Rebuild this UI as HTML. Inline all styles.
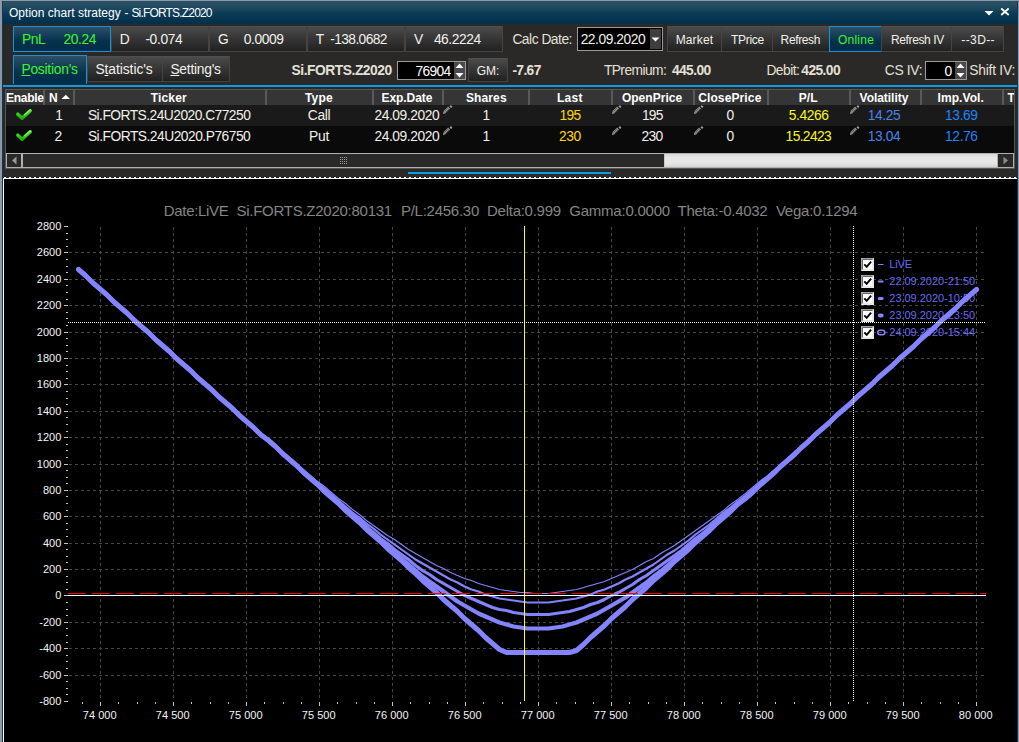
<!DOCTYPE html>
<html><head><meta charset="utf-8"><title>Option chart strategy - Si.FORTS.Z2020</title>
<style>
*{box-sizing:border-box;margin:0;padding:0}
html,body{width:1019px;height:742px;overflow:hidden;background:#2b2927}
body{position:relative;font-family:"Liberation Sans",sans-serif;font-size:13.33px;letter-spacing:-0.2px;color:#f0f0f0;line-height:1}
.abs{position:absolute}
.bl{position:absolute;left:0;top:0;width:2px;height:742px;background:#8e98a7}
.bl2{position:absolute;left:2px;top:1px;width:1px;height:741px;background:#0c3850}
.bt{position:absolute;left:0;top:0;width:1019px;height:1px;background:#8e98a7}
.br{position:absolute;left:1018px;top:0;width:1px;height:742px;background:#8e98a7}
.br2{position:absolute;left:1017px;top:1px;width:1px;height:741px;background:#0c3850}
.title{position:absolute;left:3px;top:1px;width:1014px;height:23px;background:linear-gradient(#2b5066 0%,#284e63 18%,#16435c 40%,#0b3a54 56%,#00304c 100%);}
.title span{position:absolute;left:6px;top:6px;font-size:12px;letter-spacing:-0.3px;color:#fff;white-space:nowrap}
.btn{position:absolute;top:26px;height:26px;border:1px solid #444;border-top-color:#4e4e4e;border-bottom-color:#464646;background:linear-gradient(#4b4b4b 0%,#3b3b3b 35%,#212121 100%);white-space:pre;color:#f2f2f2}
.btn span{position:absolute;top:6px;white-space:pre}
.btn.sel{border:1px solid #1592d8;background:linear-gradient(#2c5069,#05314c 60%,#002d49);color:#3fe83f}
.seg{font-size:12px;letter-spacing:0}
.tab{position:absolute;top:56px;height:26px;border:1px solid #444;border-top-color:#4e4e4e;background:linear-gradient(#4b4b4b 0%,#3b3b3b 35%,#212121 100%);font-size:13.33px;letter-spacing:-0.08px;color:#f2f2f2}
.tab span{position:absolute;top:5px;white-space:pre}
.tab.sel{top:55px;height:29px;border:1px solid #1592d8;border-bottom:none;background:linear-gradient(#2c5069,#05314c 60%,#002d49);color:#3fe83f}
u{text-decoration:underline;text-underline-offset:1px;text-decoration-thickness:1px}
.t{position:absolute;white-space:pre;line-height:1;color:#e4e0d8}
.b{font-weight:bold;color:#ececec}
.blue{position:absolute;left:3px;top:85px;width:1014px;height:2px;background:#0f9be4}
.spin{position:absolute;background:#000;border:1px solid #9a9a9a;color:#fff}
.spin span{position:absolute;top:3px;text-align:right;white-space:pre}
.spin .ud{position:absolute;right:0;top:0;width:13px;height:100%;background:#5a5a5a}
.grid{position:absolute;left:5px;top:89px;width:1010px;height:80px;border:1px solid #565656;background:#0a0a0a;overflow:hidden}
.hd{position:absolute;top:0;height:16px;background:#353535;border-right:1px solid #5c5c5c;border-left:1px solid #5c5c5c;font-weight:bold;font-size:12.3px;color:#fff;text-align:center;white-space:nowrap;padding-top:2px}
.row{position:absolute;left:0;width:1007px;height:21px}
.cell{position:absolute;top:3px;white-space:pre;font-size:13.33px;letter-spacing:-0.28px;color:#e6e6e6}
.c{text-align:center}
svg.chart{position:absolute;left:0;top:0}
svg text{font-family:"Liberation Sans",sans-serif;letter-spacing:0}
</style></head><body>
<div class="title">
<svg class="abs" style="left:978px;top:5px" width="34" height="14" viewBox="0 0 34 14"><path d="M3.5 5 h9 l-4.5 4.6z" fill="#fff"/><path d="M20.2 2.5 L27.7 9 M27.7 2.5 L20.2 9" stroke="#fff" stroke-width="1.8" fill="none"/></svg>
</div>
<div class="bl"></div><div class="bl2"></div><div class="bt"></div><div class="br"></div><div class="br2"></div>

<div class="t" style="left:9.00px;top:7px;font-size:12px;letter-spacing:0.015px;color:#fff">Option chart strategy</div>
<div class="t" style="left:124.60px;top:7px;font-size:12px;letter-spacing:0.800px;color:#fff">-</div>
<div class="t" style="left:131.40px;top:7px;font-size:12px;letter-spacing:-0.822px;color:#fff">Si.FORTS.Z2020</div>
<!-- row 1 -->
<div class="btn sel" style="left:13px;width:98px"></div>
<div class="btn" style="left:111px;width:98px"></div>
<div class="btn" style="left:209px;width:98px"></div>
<div class="btn" style="left:307px;width:98px"></div>
<div class="btn" style="left:405px;width:98px"></div>
<div class="t" style="left:22.00px;top:33.30px;font-size:13.8px;letter-spacing:-0.454px;color:#3cf52c">PnL</div>
<div class="t" style="left:63.40px;top:33.30px;font-size:13.8px;letter-spacing:-0.346px;color:#3cf52c">20.24</div>
<div class="t" style="left:119.80px;top:33.30px;font-size:13.8px;letter-spacing:-0.869px;color:#f2f0ea">D</div>
<div class="t" style="left:145.40px;top:33.30px;font-size:13.8px;letter-spacing:-0.371px;color:#f2f0ea">-0.074</div>
<div class="t" style="left:217.90px;top:33.30px;font-size:13.8px;letter-spacing:-0.434px;color:#f2f0ea">G</div>
<div class="t" style="left:243.80px;top:33.30px;font-size:13.8px;letter-spacing:-0.401px;color:#f2f0ea">0.0009</div>
<div class="t" style="left:315.65px;top:33.30px;font-size:13.8px;letter-spacing:0.613px;color:#f2f0ea">T</div>
<div class="t" style="left:330.15px;top:33.30px;font-size:13.8px;letter-spacing:-0.593px;color:#f2f0ea">-138.0682</div>
<div class="t" style="left:413.90px;top:33.30px;font-size:13.8px;letter-spacing:0.297px;color:#f2f0ea">V</div>
<div class="t" style="left:433.90px;top:33.30px;font-size:13.8px;letter-spacing:-0.439px;color:#f2f0ea">46.2224</div>
<div class="t" style="left:512.40px;top:33.30px;font-size:13.8px;letter-spacing:-0.487px;">Calc Date:</div>
<div class="spin" style="left:577px;top:27px;width:86px;height:24px"><div class="ud" style="width:11px;right:1px;top:1px;height:20px;background:#3e3e3e"><svg width="11" height="20"><path d="M1.5 8.5h8l-4 4z" fill="#fff"/></svg></div></div>
<div class="t" style="left:580.65px;top:33.30px;font-size:13.8px;letter-spacing:-0.451px;color:#f2f0ea">22.09.2020</div>
<div class="btn" style="left:667px;width:55px"></div>
<div class="btn" style="left:721px;width:52px"></div>
<div class="btn" style="left:772px;width:58px"></div>
<div class="btn sel" style="left:829px;width:53px"></div>
<div class="btn" style="left:881px;width:71px"></div>
<div class="btn" style="left:951px;width:53px"></div>
<div class="t" style="left:675.65px;top:33.84px;font-size:12px;letter-spacing:0.144px;color:#f2f0ea">Market</div>
<div class="t" style="left:730.90px;top:33.84px;font-size:12px;letter-spacing:-0.279px;color:#f2f0ea">TPrice</div>
<div class="t" style="left:780.60px;top:33.84px;font-size:12px;letter-spacing:-0.376px;color:#f2f0ea">Refresh</div>
<div class="t" style="left:837.90px;top:33.84px;font-size:12px;letter-spacing:0.252px;color:#3cf52c">Online</div>
<div class="t" style="left:891.00px;top:33.84px;font-size:12px;letter-spacing:-0.380px;color:#f2f0ea">Refresh IV</div>
<div class="t" style="left:961.30px;top:33.84px;font-size:12px;letter-spacing:0.395px;color:#f2f0ea">--3D--</div>
<!-- row 2 -->
<div class="tab sel" style="left:13px;width:74px"></div>
<div class="tab" style="left:87px;width:76px"></div>
<div class="tab" style="left:162px;width:68px"></div>
<div class="t" style="left:21.40px;top:63.30px;font-size:13.8px;letter-spacing:-0.233px;color:#3cf52c"><u>P</u>osition&#39;s</div>
<div class="t" style="left:95.40px;top:63.30px;font-size:13.8px;letter-spacing:-0.049px;color:#f2f0ea">S<u>t</u>atistic&#39;s</div>
<div class="t" style="left:170.40px;top:63.30px;font-size:13.8px;letter-spacing:-0.244px;color:#f2f0ea"><u>S</u>etting&#39;s</div>
<div class="t" style="left:291.60px;top:64.30px;font-size:13.8px;font-weight:bold;letter-spacing:-0.463px;">Si.FORTS.Z2020</div>
<div class="spin" style="left:397px;top:61px;width:69px;height:19px"><div class="ud" style="width:11px;right:0;background:#4a4a4a"><svg width="11" height="17"><path d="M1.5 6l4-4.5 4 4.5z M1.5 11l4 4.5 4-4.5z" fill="#fff"/></svg></div></div>
<div class="t" style="left:415.50px;top:65.30px;font-size:13.8px;letter-spacing:-0.695px;color:#fff">76904</div>
<div class="btn" style="left:468px;top:58px;width:40px;height:24px"></div>
<div class="t" style="left:476.80px;top:64.84px;font-size:12px;letter-spacing:-0.057px;color:#f2f0ea">GM:</div>
<div class="t" style="left:512.40px;top:64.30px;font-size:13.8px;font-weight:bold;letter-spacing:-0.631px;">-7.67</div>
<div class="t" style="left:603.90px;top:64.30px;font-size:13.8px;letter-spacing:-0.574px;">TPremium:</div>
<div class="t" style="left:671.90px;top:64.30px;font-size:13.8px;font-weight:bold;letter-spacing:-0.567px;">445.00</div>
<div class="t" style="left:766.40px;top:64.30px;font-size:13.8px;letter-spacing:-0.524px;">Debit:</div>
<div class="t" style="left:801.30px;top:64.30px;font-size:13.8px;font-weight:bold;letter-spacing:-0.584px;">425.00</div>
<div class="t" style="left:884.80px;top:64.30px;font-size:13.8px;letter-spacing:-0.327px;">CS IV:</div>
<div class="spin" style="left:925px;top:61px;width:42px;height:19px"><div class="ud" style="width:11px;right:0;background:#4a4a4a"><svg width="11" height="17"><path d="M1.5 6l4-4.5 4 4.5z M1.5 11l4 4.5 4-4.5z" fill="#fff"/></svg></div></div>
<div class="t" style="left:944.40px;top:65.30px;font-size:13.8px;letter-spacing:-0.687px;color:#fff">0</div>
<div class="t" style="left:969.30px;top:64.30px;font-size:13.8px;letter-spacing:-0.235px;">Shift IV:</div>
<div class="blue"></div>
<!-- grid -->
<div class="grid"></div>
<div class="abs" style="left:6px;top:90px;width:1008px;height:15px;background:#353535"></div>
<div class="abs" style="left:6px;top:105px;width:1008px;height:21px;background:#1a1a1a"></div>
<div class="abs" style="left:43px;top:90px;width:2px;height:15px;background:#5a5a5a"></div>
<div class="abs" style="left:73px;top:90px;width:2px;height:15px;background:#5a5a5a"></div>
<div class="abs" style="left:265px;top:90px;width:2px;height:15px;background:#5a5a5a"></div>
<div class="abs" style="left:372px;top:90px;width:2px;height:15px;background:#5a5a5a"></div>
<div class="abs" style="left:442px;top:90px;width:2px;height:15px;background:#5a5a5a"></div>
<div class="abs" style="left:528px;top:90px;width:2px;height:15px;background:#5a5a5a"></div>
<div class="abs" style="left:611px;top:90px;width:2px;height:15px;background:#5a5a5a"></div>
<div class="abs" style="left:693px;top:90px;width:2px;height:15px;background:#5a5a5a"></div>
<div class="abs" style="left:767px;top:90px;width:2px;height:15px;background:#5a5a5a"></div>
<div class="abs" style="left:849px;top:90px;width:2px;height:15px;background:#5a5a5a"></div>
<div class="abs" style="left:920px;top:90px;width:2px;height:15px;background:#5a5a5a"></div>
<div class="abs" style="left:1002px;top:90px;width:2px;height:15px;background:#5a5a5a"></div>
<div class="t" style="left:6.10px;top:91.84px;font-size:12px;font-weight:bold;letter-spacing:-0.293px;color:#fff">Enable</div>
<div class="t" style="left:49.00px;top:91.84px;font-size:12px;font-weight:bold;letter-spacing:0.328px;color:#fff">N</div>
<div class="t" style="left:150.65px;top:91.84px;font-size:12px;font-weight:bold;letter-spacing:0.193px;color:#fff">Ticker</div>
<div class="t" style="left:305.00px;top:91.84px;font-size:12px;font-weight:bold;letter-spacing:0.144px;color:#fff">Type</div>
<div class="t" style="left:381.60px;top:91.84px;font-size:12px;font-weight:bold;letter-spacing:-0.082px;color:#fff">Exp.Date</div>
<div class="t" style="left:465.90px;top:91.84px;font-size:12px;font-weight:bold;letter-spacing:0.128px;color:#fff">Shares</div>
<div class="t" style="left:556.90px;top:91.84px;font-size:12px;font-weight:bold;letter-spacing:0.278px;color:#fff">Last</div>
<div class="t" style="left:621.90px;top:91.84px;font-size:12px;font-weight:bold;letter-spacing:0.030px;color:#fff">OpenPrice</div>
<div class="t" style="left:698.15px;top:91.84px;font-size:12px;font-weight:bold;letter-spacing:0.125px;color:#fff">ClosePrice</div>
<div class="t" style="left:798.80px;top:91.84px;font-size:12px;font-weight:bold;letter-spacing:0.009px;color:#fff">P/L</div>
<div class="t" style="left:859.60px;top:91.84px;font-size:12px;font-weight:bold;letter-spacing:-0.043px;color:#fff">Volatility</div>
<div class="t" style="left:937.60px;top:91.84px;font-size:12px;font-weight:bold;letter-spacing:0.052px;color:#fff">Imp.Vol.</div>
<div class="t" style="left:1007.40px;top:91.84px;font-size:12px;font-weight:bold;letter-spacing:0.956px;color:#fff;width:6.6px;overflow:hidden">T</div>
<svg class="abs" style="left:61px;top:94px" width="10" height="6"><path d="M0.5 5h8.5l-4.2-4.3z" fill="#fff"/></svg>
<div class="t" style="left:55.20px;top:109.30px;font-size:13.8px;letter-spacing:-1.687px;color:#f2f0ea">1</div>
<div class="t" style="left:54.60px;top:130.30px;font-size:13.8px;letter-spacing:0.212px;color:#f2f0ea">2</div>
<div class="t" style="left:87.90px;top:109.30px;font-size:13.8px;letter-spacing:-0.531px;color:#f2f0ea">Si.FORTS.24U2020.C77250</div>
<div class="t" style="left:87.90px;top:130.30px;font-size:13.8px;letter-spacing:-0.498px;color:#f2f0ea">Si.FORTS.24U2020.P76750</div>
<div class="t" style="left:307.80px;top:109.30px;font-size:13.8px;letter-spacing:-0.320px;color:#f2f0ea">Call</div>
<div class="t" style="left:309.00px;top:130.30px;font-size:13.8px;letter-spacing:-0.140px;color:#f2f0ea">Put</div>
<div class="t" style="left:374.50px;top:109.30px;font-size:13.8px;letter-spacing:-0.436px;color:#f2f0ea">24.09.2020</div>
<div class="t" style="left:374.50px;top:130.30px;font-size:13.8px;letter-spacing:-0.436px;color:#f2f0ea">24.09.2020</div>
<div class="t" style="left:482.40px;top:109.30px;font-size:13.8px;letter-spacing:-1.638px;color:#f2f0ea">1</div>
<div class="t" style="left:482.40px;top:130.30px;font-size:13.8px;letter-spacing:-1.638px;color:#f2f0ea">1</div>
<div class="t" style="left:559.40px;top:109.30px;font-size:13.8px;letter-spacing:-0.577px;color:#ffd700">195</div>
<div class="t" style="left:558.90px;top:130.30px;font-size:13.8px;letter-spacing:-0.410px;color:#ffd700">230</div>
<div class="t" style="left:641.90px;top:109.30px;font-size:13.8px;letter-spacing:-0.744px;color:#f2f0ea">195</div>
<div class="t" style="left:641.40px;top:130.30px;font-size:13.8px;letter-spacing:-0.577px;color:#f2f0ea">230</div>
<div class="t" style="left:726.40px;top:109.30px;font-size:13.8px;letter-spacing:-0.388px;color:#f2f0ea">0</div>
<div class="t" style="left:726.40px;top:130.30px;font-size:13.8px;letter-spacing:-0.388px;color:#f2f0ea">0</div>
<div class="t" style="left:788.80px;top:109.30px;font-size:13.8px;letter-spacing:-0.417px;color:#f8f814">5.4266</div>
<div class="t" style="left:785.60px;top:130.30px;font-size:13.8px;letter-spacing:-0.639px;color:#f8f814">15.2423</div>
<div class="t" style="left:867.80px;top:109.30px;font-size:13.8px;letter-spacing:-0.406px;color:#4c82ec">14.25</div>
<div class="t" style="left:867.80px;top:130.30px;font-size:13.8px;letter-spacing:-0.406px;color:#4c82ec">13.04</div>
<div class="t" style="left:945.10px;top:109.30px;font-size:13.8px;letter-spacing:-0.406px;color:#1e84f8">13.69</div>
<div class="t" style="left:945.10px;top:130.30px;font-size:13.8px;letter-spacing:-0.406px;color:#1e84f8">12.76</div>
<svg class="abs" style="left:14px;top:105px" width="20" height="16" viewBox="0 0 20 16"><defs><linearGradient id="g105" gradientUnits="userSpaceOnUse" x1="0" y1="3" x2="0" y2="15"><stop offset="0" stop-color="#6cf048"/><stop offset="0.45" stop-color="#36d416"/><stop offset="1" stop-color="#1fa00c"/></linearGradient></defs><path d="M3.8 9.2 L8.1 13.2 L16.2 5.8" fill="none" stroke="url(#g105)" stroke-width="3.5" stroke-linecap="round" stroke-linejoin="round"/><path d="M10.5 9.7 L16 5" fill="none" stroke="#d8ffd0" stroke-opacity="0.45" stroke-width="1.3" stroke-linecap="round"/></svg>
<svg class="abs" style="left:443px;top:105px" width="10" height="10" viewBox="0 0 10 10"><path d="M0 9 L0.6 6.2 L2.6 8.2z" fill="#a2a2a2"/><path d="M1.6 7 L6 2.6" stroke="#9c9c9c" stroke-width="2.8" stroke-dasharray="1.3 0.35" fill="none"/><path d="M6.5 1.5 L7.9 0.1 L9.5 1.7 L8.1 3.1z" fill="#9c9c9c"/></svg>
<svg class="abs" style="left:612px;top:105px" width="10" height="10" viewBox="0 0 10 10"><path d="M0 9 L0.6 6.2 L2.6 8.2z" fill="#a2a2a2"/><path d="M1.6 7 L6 2.6" stroke="#9c9c9c" stroke-width="2.8" stroke-dasharray="1.3 0.35" fill="none"/><path d="M6.5 1.5 L7.9 0.1 L9.5 1.7 L8.1 3.1z" fill="#9c9c9c"/></svg>
<svg class="abs" style="left:694px;top:105px" width="10" height="10" viewBox="0 0 10 10"><path d="M0 9 L0.6 6.2 L2.6 8.2z" fill="#a2a2a2"/><path d="M1.6 7 L6 2.6" stroke="#9c9c9c" stroke-width="2.8" stroke-dasharray="1.3 0.35" fill="none"/><path d="M6.5 1.5 L7.9 0.1 L9.5 1.7 L8.1 3.1z" fill="#9c9c9c"/></svg>
<svg class="abs" style="left:850px;top:105px" width="10" height="10" viewBox="0 0 10 10"><path d="M0 9 L0.6 6.2 L2.6 8.2z" fill="#a2a2a2"/><path d="M1.6 7 L6 2.6" stroke="#9c9c9c" stroke-width="2.8" stroke-dasharray="1.3 0.35" fill="none"/><path d="M6.5 1.5 L7.9 0.1 L9.5 1.7 L8.1 3.1z" fill="#9c9c9c"/></svg>
<svg class="abs" style="left:14px;top:126px" width="20" height="16" viewBox="0 0 20 16"><defs><linearGradient id="g126" gradientUnits="userSpaceOnUse" x1="0" y1="3" x2="0" y2="15"><stop offset="0" stop-color="#6cf048"/><stop offset="0.45" stop-color="#36d416"/><stop offset="1" stop-color="#1fa00c"/></linearGradient></defs><path d="M3.8 9.2 L8.1 13.2 L16.2 5.8" fill="none" stroke="url(#g126)" stroke-width="3.5" stroke-linecap="round" stroke-linejoin="round"/><path d="M10.5 9.7 L16 5" fill="none" stroke="#d8ffd0" stroke-opacity="0.45" stroke-width="1.3" stroke-linecap="round"/></svg>
<svg class="abs" style="left:443px;top:126px" width="10" height="10" viewBox="0 0 10 10"><path d="M0 9 L0.6 6.2 L2.6 8.2z" fill="#a2a2a2"/><path d="M1.6 7 L6 2.6" stroke="#9c9c9c" stroke-width="2.8" stroke-dasharray="1.3 0.35" fill="none"/><path d="M6.5 1.5 L7.9 0.1 L9.5 1.7 L8.1 3.1z" fill="#9c9c9c"/></svg>
<svg class="abs" style="left:612px;top:126px" width="10" height="10" viewBox="0 0 10 10"><path d="M0 9 L0.6 6.2 L2.6 8.2z" fill="#a2a2a2"/><path d="M1.6 7 L6 2.6" stroke="#9c9c9c" stroke-width="2.8" stroke-dasharray="1.3 0.35" fill="none"/><path d="M6.5 1.5 L7.9 0.1 L9.5 1.7 L8.1 3.1z" fill="#9c9c9c"/></svg>
<svg class="abs" style="left:694px;top:126px" width="10" height="10" viewBox="0 0 10 10"><path d="M0 9 L0.6 6.2 L2.6 8.2z" fill="#a2a2a2"/><path d="M1.6 7 L6 2.6" stroke="#9c9c9c" stroke-width="2.8" stroke-dasharray="1.3 0.35" fill="none"/><path d="M6.5 1.5 L7.9 0.1 L9.5 1.7 L8.1 3.1z" fill="#9c9c9c"/></svg>
<svg class="abs" style="left:850px;top:126px" width="10" height="10" viewBox="0 0 10 10"><path d="M0 9 L0.6 6.2 L2.6 8.2z" fill="#a2a2a2"/><path d="M1.6 7 L6 2.6" stroke="#9c9c9c" stroke-width="2.8" stroke-dasharray="1.3 0.35" fill="none"/><path d="M6.5 1.5 L7.9 0.1 L9.5 1.7 L8.1 3.1z" fill="#9c9c9c"/></svg>
<!-- scrollbar -->
<div class="abs" style="left:6px;top:153px;width:1008px;height:15px;border:1px solid #b0b0b0;background:#2a2927">
<div class="abs" style="left:14px;top:0;width:2px;height:13px;background:#b0b0b0"></div>
<svg class="abs" style="left:3px;top:2px" width="8" height="9"><path d="M6.5 0.5v8l-4.5-4z" fill="#9a9a9a"/></svg>
<div class="abs" style="left:657px;top:0;width:334px;height:13px;background:linear-gradient(#d8d8d8,#e6e6e6 30%,#e6e6e6 70%,#d4d4d4);box-shadow:inset 1px 0 0 #c8c8c8,inset -1px 0 0 #c8c8c8"></div>
<div class="abs" style="left:990px;top:0;width:16px;height:13px;background:#2a2927;border-left:1px solid #b0b0b0"></div>
<svg class="abs" style="left:995px;top:2px" width="8" height="9"><path d="M1.5 0.8v7.4l4.5-3.7z" fill="#8e8e8e"/></svg>
<svg class="abs" style="left:333px;top:3px" width="10" height="9"><g fill="#9a9a9a"><rect x="0" y="0" width="1" height="1"/><rect x="0" y="2" width="1" height="1"/><rect x="0" y="4" width="1" height="1"/><rect x="0" y="6" width="1" height="1"/><rect x="2" y="0" width="1" height="1"/><rect x="2" y="2" width="1" height="1"/><rect x="2" y="4" width="1" height="1"/><rect x="2" y="6" width="1" height="1"/><rect x="4" y="0" width="1" height="1"/><rect x="4" y="2" width="1" height="1"/><rect x="4" y="4" width="1" height="1"/><rect x="4" y="6" width="1" height="1"/><rect x="6" y="0" width="1" height="1"/><rect x="6" y="2" width="1" height="1"/><rect x="6" y="4" width="1" height="1"/><rect x="6" y="6" width="1" height="1"/></g></svg>
</div>
<!-- splitter -->
<div class="abs" style="left:408px;top:172px;width:203px;height:2px;background:#0f9be4"></div>
<div class="abs" style="left:3px;top:177px;width:1014px;height:1px;background:repeating-linear-gradient(90deg,#222 0,#222 1px,#fff 1px,#fff 3px,#222 3px,#222 5px)"></div>
<div class="abs" style="left:3px;top:178px;width:1014px;height:564px;background:#000;border-top:1px solid #fff;border-left:1px solid #fff"></div>
<svg class="chart" width="1019" height="742" viewBox="0 0 1019 742">
<g stroke="#474747" stroke-width="1" stroke-dasharray="3 3" shape-rendering="crispEdges">
<line x1="100.5" y1="227" x2="100.5" y2="701"/>
<line x1="173.5" y1="227" x2="173.5" y2="701"/>
<line x1="246.5" y1="227" x2="246.5" y2="701"/>
<line x1="319.5" y1="227" x2="319.5" y2="701"/>
<line x1="392.5" y1="227" x2="392.5" y2="701"/>
<line x1="465.5" y1="227" x2="465.5" y2="701"/>
<line x1="538.5" y1="227" x2="538.5" y2="701"/>
<line x1="611.5" y1="227" x2="611.5" y2="701"/>
<line x1="684.5" y1="227" x2="684.5" y2="701"/>
<line x1="757.5" y1="227" x2="757.5" y2="701"/>
<line x1="830.5" y1="227" x2="830.5" y2="701"/>
<line x1="903.5" y1="227" x2="903.5" y2="701"/>
<line x1="976.5" y1="227" x2="976.5" y2="701"/>
<line x1="69" y1="675.5" x2="986" y2="675.5"/>
<line x1="69" y1="648.5" x2="986" y2="648.5"/>
<line x1="69" y1="622.5" x2="986" y2="622.5"/>
<line x1="69" y1="595.5" x2="986" y2="595.5"/>
<line x1="69" y1="569.5" x2="986" y2="569.5"/>
<line x1="69" y1="543.5" x2="986" y2="543.5"/>
<line x1="69" y1="516.5" x2="986" y2="516.5"/>
<line x1="69" y1="490.5" x2="986" y2="490.5"/>
<line x1="69" y1="464.5" x2="986" y2="464.5"/>
<line x1="69" y1="437.5" x2="986" y2="437.5"/>
<line x1="69" y1="411.5" x2="986" y2="411.5"/>
<line x1="69" y1="384.5" x2="986" y2="384.5"/>
<line x1="69" y1="358.5" x2="986" y2="358.5"/>
<line x1="69" y1="332.5" x2="986" y2="332.5"/>
<line x1="69" y1="305.5" x2="986" y2="305.5"/>
<line x1="69" y1="279.5" x2="986" y2="279.5"/>
<line x1="69" y1="252.5" x2="986" y2="252.5"/>
</g>
<g stroke="#c4c4c4" stroke-width="1" shape-rendering="crispEdges">
<line x1="64" y1="701.5" x2="68" y2="701.5"/>
<line x1="66" y1="694.5" x2="68" y2="694.5"/>
<line x1="66" y1="688.5" x2="68" y2="688.5"/>
<line x1="66" y1="681.5" x2="68" y2="681.5"/>
<line x1="64" y1="675.5" x2="68" y2="675.5"/>
<line x1="66" y1="668.5" x2="68" y2="668.5"/>
<line x1="66" y1="661.5" x2="68" y2="661.5"/>
<line x1="66" y1="655.5" x2="68" y2="655.5"/>
<line x1="64" y1="648.5" x2="68" y2="648.5"/>
<line x1="66" y1="642.5" x2="68" y2="642.5"/>
<line x1="66" y1="635.5" x2="68" y2="635.5"/>
<line x1="66" y1="628.5" x2="68" y2="628.5"/>
<line x1="64" y1="622.5" x2="68" y2="622.5"/>
<line x1="66" y1="615.5" x2="68" y2="615.5"/>
<line x1="66" y1="609.5" x2="68" y2="609.5"/>
<line x1="66" y1="602.5" x2="68" y2="602.5"/>
<line x1="64" y1="595.5" x2="68" y2="595.5"/>
<line x1="66" y1="589.5" x2="68" y2="589.5"/>
<line x1="66" y1="582.5" x2="68" y2="582.5"/>
<line x1="66" y1="576.5" x2="68" y2="576.5"/>
<line x1="64" y1="569.5" x2="68" y2="569.5"/>
<line x1="66" y1="562.5" x2="68" y2="562.5"/>
<line x1="66" y1="556.5" x2="68" y2="556.5"/>
<line x1="66" y1="549.5" x2="68" y2="549.5"/>
<line x1="64" y1="543.5" x2="68" y2="543.5"/>
<line x1="66" y1="536.5" x2="68" y2="536.5"/>
<line x1="66" y1="529.5" x2="68" y2="529.5"/>
<line x1="66" y1="523.5" x2="68" y2="523.5"/>
<line x1="64" y1="516.5" x2="68" y2="516.5"/>
<line x1="66" y1="510.5" x2="68" y2="510.5"/>
<line x1="66" y1="503.5" x2="68" y2="503.5"/>
<line x1="66" y1="496.5" x2="68" y2="496.5"/>
<line x1="64" y1="490.5" x2="68" y2="490.5"/>
<line x1="66" y1="483.5" x2="68" y2="483.5"/>
<line x1="66" y1="477.5" x2="68" y2="477.5"/>
<line x1="66" y1="470.5" x2="68" y2="470.5"/>
<line x1="64" y1="464.5" x2="68" y2="464.5"/>
<line x1="66" y1="457.5" x2="68" y2="457.5"/>
<line x1="66" y1="450.5" x2="68" y2="450.5"/>
<line x1="66" y1="444.5" x2="68" y2="444.5"/>
<line x1="64" y1="437.5" x2="68" y2="437.5"/>
<line x1="66" y1="431.5" x2="68" y2="431.5"/>
<line x1="66" y1="424.5" x2="68" y2="424.5"/>
<line x1="66" y1="417.5" x2="68" y2="417.5"/>
<line x1="64" y1="411.5" x2="68" y2="411.5"/>
<line x1="66" y1="404.5" x2="68" y2="404.5"/>
<line x1="66" y1="398.5" x2="68" y2="398.5"/>
<line x1="66" y1="391.5" x2="68" y2="391.5"/>
<line x1="64" y1="384.5" x2="68" y2="384.5"/>
<line x1="66" y1="378.5" x2="68" y2="378.5"/>
<line x1="66" y1="371.5" x2="68" y2="371.5"/>
<line x1="66" y1="365.5" x2="68" y2="365.5"/>
<line x1="64" y1="358.5" x2="68" y2="358.5"/>
<line x1="66" y1="351.5" x2="68" y2="351.5"/>
<line x1="66" y1="345.5" x2="68" y2="345.5"/>
<line x1="66" y1="338.5" x2="68" y2="338.5"/>
<line x1="64" y1="332.5" x2="68" y2="332.5"/>
<line x1="66" y1="325.5" x2="68" y2="325.5"/>
<line x1="66" y1="318.5" x2="68" y2="318.5"/>
<line x1="66" y1="312.5" x2="68" y2="312.5"/>
<line x1="64" y1="305.5" x2="68" y2="305.5"/>
<line x1="66" y1="299.5" x2="68" y2="299.5"/>
<line x1="66" y1="292.5" x2="68" y2="292.5"/>
<line x1="66" y1="285.5" x2="68" y2="285.5"/>
<line x1="64" y1="279.5" x2="68" y2="279.5"/>
<line x1="66" y1="272.5" x2="68" y2="272.5"/>
<line x1="66" y1="266.5" x2="68" y2="266.5"/>
<line x1="66" y1="259.5" x2="68" y2="259.5"/>
<line x1="64" y1="252.5" x2="68" y2="252.5"/>
<line x1="66" y1="246.5" x2="68" y2="246.5"/>
<line x1="66" y1="239.5" x2="68" y2="239.5"/>
<line x1="66" y1="233.5" x2="68" y2="233.5"/>
<line x1="64" y1="226.5" x2="68" y2="226.5"/>
<line x1="82.5" y1="702" x2="82.5" y2="704"/>
<line x1="100.5" y1="702" x2="100.5" y2="706"/>
<line x1="118.5" y1="702" x2="118.5" y2="704"/>
<line x1="137.5" y1="702" x2="137.5" y2="704"/>
<line x1="155.5" y1="702" x2="155.5" y2="704"/>
<line x1="173.5" y1="702" x2="173.5" y2="706"/>
<line x1="191.5" y1="702" x2="191.5" y2="704"/>
<line x1="210.5" y1="702" x2="210.5" y2="704"/>
<line x1="228.5" y1="702" x2="228.5" y2="704"/>
<line x1="246.5" y1="702" x2="246.5" y2="706"/>
<line x1="264.5" y1="702" x2="264.5" y2="704"/>
<line x1="283.5" y1="702" x2="283.5" y2="704"/>
<line x1="301.5" y1="702" x2="301.5" y2="704"/>
<line x1="319.5" y1="702" x2="319.5" y2="706"/>
<line x1="337.5" y1="702" x2="337.5" y2="704"/>
<line x1="356.5" y1="702" x2="356.5" y2="704"/>
<line x1="374.5" y1="702" x2="374.5" y2="704"/>
<line x1="392.5" y1="702" x2="392.5" y2="706"/>
<line x1="410.5" y1="702" x2="410.5" y2="704"/>
<line x1="429.5" y1="702" x2="429.5" y2="704"/>
<line x1="447.5" y1="702" x2="447.5" y2="704"/>
<line x1="465.5" y1="702" x2="465.5" y2="706"/>
<line x1="483.5" y1="702" x2="483.5" y2="704"/>
<line x1="502.5" y1="702" x2="502.5" y2="704"/>
<line x1="520.5" y1="702" x2="520.5" y2="704"/>
<line x1="538.5" y1="702" x2="538.5" y2="706"/>
<line x1="556.5" y1="702" x2="556.5" y2="704"/>
<line x1="575.5" y1="702" x2="575.5" y2="704"/>
<line x1="593.5" y1="702" x2="593.5" y2="704"/>
<line x1="611.5" y1="702" x2="611.5" y2="706"/>
<line x1="629.5" y1="702" x2="629.5" y2="704"/>
<line x1="648.5" y1="702" x2="648.5" y2="704"/>
<line x1="666.5" y1="702" x2="666.5" y2="704"/>
<line x1="684.5" y1="702" x2="684.5" y2="706"/>
<line x1="702.5" y1="702" x2="702.5" y2="704"/>
<line x1="721.5" y1="702" x2="721.5" y2="704"/>
<line x1="739.5" y1="702" x2="739.5" y2="704"/>
<line x1="757.5" y1="702" x2="757.5" y2="706"/>
<line x1="775.5" y1="702" x2="775.5" y2="704"/>
<line x1="794.5" y1="702" x2="794.5" y2="704"/>
<line x1="812.5" y1="702" x2="812.5" y2="704"/>
<line x1="830.5" y1="702" x2="830.5" y2="706"/>
<line x1="848.5" y1="702" x2="848.5" y2="704"/>
<line x1="867.5" y1="702" x2="867.5" y2="704"/>
<line x1="885.5" y1="702" x2="885.5" y2="704"/>
<line x1="903.5" y1="702" x2="903.5" y2="706"/>
<line x1="921.5" y1="702" x2="921.5" y2="704"/>
<line x1="940.5" y1="702" x2="940.5" y2="704"/>
<line x1="958.5" y1="702" x2="958.5" y2="704"/>
<line x1="976.5" y1="702" x2="976.5" y2="706"/>
</g>
<rect x="861" y="258" width="13" height="13" fill="#e8e8e8"/>
<path d="M861.5 270.5 v-12 h12" fill="none" stroke="#a0a0a0" stroke-width="1"/>
<path d="M862.5 269.5 v-10 h10" fill="none" stroke="#6a6a6a" stroke-width="1"/>
<rect x="863" y="260" width="9" height="9" fill="#ffffff"/>
<path d="M864.3 264.3 l2.4 2.6 l4.4 -5.2" fill="none" stroke="#000" stroke-width="1.9"/>
<line x1="878.4" y1="264.5" x2="883.0" y2="264.5" stroke="#8484ff" stroke-width="1.2" stroke-linecap="round"/>
<text x="889.3" y="268" font-size="11" fill="#6a6af2" textLength="22.8" lengthAdjust="spacing">LiVE</text>
<rect x="861" y="275" width="13" height="13" fill="#e8e8e8"/>
<path d="M861.5 287.5 v-12 h12" fill="none" stroke="#a0a0a0" stroke-width="1"/>
<path d="M862.5 286.5 v-10 h10" fill="none" stroke="#6a6a6a" stroke-width="1"/>
<rect x="863" y="277" width="9" height="9" fill="#ffffff"/>
<path d="M864.3 281.3 l2.4 2.6 l4.4 -5.2" fill="none" stroke="#000" stroke-width="1.9"/>
<line x1="878.8" y1="281.5" x2="882.6" y2="281.5" stroke="#8484ff" stroke-width="2" stroke-linecap="round"/>
<text x="889.3" y="285" font-size="11" fill="#6a6af2" textLength="85.8" lengthAdjust="spacing">22.09.2020-21:50</text>
<rect x="861" y="292" width="13" height="13" fill="#e8e8e8"/>
<path d="M861.5 304.5 v-12 h12" fill="none" stroke="#a0a0a0" stroke-width="1"/>
<path d="M862.5 303.5 v-10 h10" fill="none" stroke="#6a6a6a" stroke-width="1"/>
<rect x="863" y="294" width="9" height="9" fill="#ffffff"/>
<path d="M864.3 298.3 l2.4 2.6 l4.4 -5.2" fill="none" stroke="#000" stroke-width="1.9"/>
<line x1="879.3" y1="298.5" x2="882.1" y2="298.5" stroke="#8484ff" stroke-width="3" stroke-linecap="round"/>
<text x="889.3" y="302" font-size="11" fill="#6a6af2" textLength="85.8" lengthAdjust="spacing">23.09.2020-10:50</text>
<rect x="861" y="309" width="13" height="13" fill="#e8e8e8"/>
<path d="M861.5 321.5 v-12 h12" fill="none" stroke="#a0a0a0" stroke-width="1"/>
<path d="M862.5 320.5 v-10 h10" fill="none" stroke="#6a6a6a" stroke-width="1"/>
<rect x="863" y="311" width="9" height="9" fill="#ffffff"/>
<path d="M864.3 315.3 l2.4 2.6 l4.4 -5.2" fill="none" stroke="#000" stroke-width="1.9"/>
<line x1="879.8" y1="315.5" x2="881.6" y2="315.5" stroke="#8484ff" stroke-width="4" stroke-linecap="round"/>
<text x="889.3" y="319" font-size="11" fill="#6a6af2" textLength="85.8" lengthAdjust="spacing">23.09.2020-23:50</text>
<rect x="861" y="326" width="13" height="13" fill="#e8e8e8"/>
<path d="M861.5 338.5 v-12 h12" fill="none" stroke="#a0a0a0" stroke-width="1"/>
<path d="M862.5 337.5 v-10 h10" fill="none" stroke="#6a6a6a" stroke-width="1"/>
<rect x="863" y="328" width="9" height="9" fill="#ffffff"/>
<path d="M864.3 332.3 l2.4 2.6 l4.4 -5.2" fill="none" stroke="#000" stroke-width="1.9"/>
<rect x="877.8" y="330.3" width="7" height="4.4" rx="2.2" fill="none" stroke="#8484ff" stroke-width="1.6"/>
<text x="889.3" y="336" font-size="11" fill="#6a6af2" textLength="85.8" lengthAdjust="spacing">24.09.2020-15:44</text>
<g fill="none" stroke="#8484ff" stroke-linecap="round" stroke-linejoin="round">
<path stroke-width="1.1" d="M78.5 269.5 L85.5 275.5 L92.5 282.5 L99.5 288.5 L106.5 294.5 L113.5 301.5 L120.5 307.5 L127.5 313.5 L134.5 320.5 L141.5 326.5 L148.5 332.5 L155.5 339.5 L162.5 345.5 L169.5 351.5 L176.5 357.5 L183.5 364.5 L190.5 370.5 L197.5 376.5 L204.5 383.5 L211.5 389.5 L218.5 395.5 L225.5 402.5 L232.5 408.5 L239.5 414.5 L246.5 420.5 L253.5 426.5 L260.5 433.5 L268.5 439.5 L275.5 445.5 L282.5 451.5 L289.5 457.5 L296.5 463.5 L303.5 469.5 L310.5 475.5 L317.5 481.5 L324.5 486.5 L331.5 492.5 L338.5 498.5 L345.5 503.5 L352.5 509.5 L359.5 514.5 L366.5 520.5 L373.5 525.5 L380.5 530.5 L387.5 535.5 L394.5 539.5 L401.5 544.5 L408.5 549.5 L415.5 553.5 L422.5 557.5 L429.5 561.5 L436.5 565.5 L443.5 568.5 L450.5 572.5 L457.5 575.5 L464.5 578.5 L471.5 580.5 L478.5 583.5 L485.5 585.5 L492.5 587.5 L499.5 589.5 L506.5 590.5 L513.5 591.5 L520.5 592.5 L527.5 592.5 L534.5 593.5 L541.5 593.5 L548.5 593.5 L555.5 592.5 L562.5 591.5 L569.5 590.5 L576.5 589.5 L583.5 587.5 L590.5 585.5 L597.5 583.5 L604.5 581.5 L611.5 578.5 L618.5 575.5 L625.5 572.5 L632.5 569.5 L639.5 565.5 L646.5 561.5 L653.5 558.5 L660.5 553.5 L667.5 549.5 L674.5 545.5 L681.5 540.5 L688.5 535.5 L695.5 530.5 L702.5 525.5 L709.5 520.5 L716.5 515.5 L723.5 510.5 L730.5 504.5 L737.5 499.5 L745.5 493.5 L752.5 487.5 L759.5 481.5 L766.5 476.5 L773.5 470.5 L780.5 464.5 L787.5 458.5 L794.5 452.5 L801.5 446.5 L808.5 439.5 L815.5 433.5 L822.5 427.5 L829.5 421.5 L836.5 415.5 L843.5 409.5 L850.5 402.5 L857.5 396.5 L864.5 390.5 L871.5 383.5 L878.5 377.5 L885.5 371.5 L892.5 365.5 L899.5 358.5 L906.5 352.5 L913.5 346.5 L920.5 339.5 L927.5 333.5 L934.5 327.5 L941.5 320.5 L948.5 314.5 L955.5 308.5 L962.5 301.5 L969.5 295.5 L976.5 289.5"/>
<path stroke-width="2.1" d="M78.5 269.5 L85.5 275.5 L92.5 282.5 L99.5 288.5 L106.5 294.5 L113.5 301.5 L120.5 307.5 L127.5 313.5 L134.5 320.5 L141.5 326.5 L148.5 332.5 L155.5 339.5 L162.5 345.5 L169.5 351.5 L176.5 358.5 L183.5 364.5 L190.5 370.5 L197.5 377.5 L204.5 383.5 L211.5 389.5 L218.5 396.5 L225.5 402.5 L232.5 408.5 L239.5 414.5 L246.5 421.5 L253.5 427.5 L260.5 433.5 L268.5 439.5 L275.5 446.5 L282.5 452.5 L289.5 458.5 L296.5 464.5 L303.5 470.5 L310.5 476.5 L317.5 482.5 L324.5 488.5 L331.5 494.5 L338.5 500.5 L345.5 506.5 L352.5 512.5 L359.5 517.5 L366.5 523.5 L373.5 528.5 L380.5 534.5 L387.5 539.5 L394.5 544.5 L401.5 549.5 L408.5 554.5 L415.5 559.5 L422.5 563.5 L429.5 567.5 L436.5 571.5 L443.5 575.5 L450.5 579.5 L457.5 582.5 L464.5 586.5 L471.5 589.5 L478.5 591.5 L485.5 594.5 L492.5 596.5 L499.5 598.5 L506.5 599.5 L513.5 600.5 L520.5 601.5 L527.5 602.5 L534.5 602.5 L541.5 602.5 L548.5 602.5 L555.5 601.5 L562.5 600.5 L569.5 599.5 L576.5 598.5 L583.5 596.5 L590.5 594.5 L597.5 591.5 L604.5 589.5 L611.5 586.5 L618.5 583.5 L625.5 579.5 L632.5 576.5 L639.5 572.5 L646.5 568.5 L653.5 564.5 L660.5 559.5 L667.5 554.5 L674.5 550.5 L681.5 545.5 L688.5 540.5 L695.5 534.5 L702.5 529.5 L709.5 524.5 L716.5 518.5 L723.5 512.5 L730.5 507.5 L737.5 501.5 L745.5 495.5 L752.5 489.5 L759.5 483.5 L766.5 477.5 L773.5 471.5 L780.5 465.5 L787.5 459.5 L794.5 453.5 L801.5 446.5 L808.5 440.5 L815.5 434.5 L822.5 428.5 L829.5 421.5 L836.5 415.5 L843.5 409.5 L850.5 403.5 L857.5 396.5 L864.5 390.5 L871.5 384.5 L878.5 377.5 L885.5 371.5 L892.5 365.5 L899.5 358.5 L906.5 352.5 L913.5 346.5 L920.5 339.5 L927.5 333.5 L934.5 327.5 L941.5 320.5 L948.5 314.5 L955.5 308.5 L962.5 301.5 L969.5 295.5 L976.5 289.5"/>
<path stroke-width="3.1" d="M78.5 269.5 L85.5 275.5 L92.5 282.5 L99.5 288.5 L106.5 294.5 L113.5 301.5 L120.5 307.5 L127.5 313.5 L134.5 320.5 L141.5 326.5 L148.5 332.5 L155.5 339.5 L162.5 345.5 L169.5 351.5 L176.5 358.5 L183.5 364.5 L190.5 370.5 L197.5 377.5 L204.5 383.5 L211.5 389.5 L218.5 396.5 L225.5 402.5 L232.5 408.5 L239.5 415.5 L246.5 421.5 L253.5 427.5 L260.5 434.5 L268.5 440.5 L275.5 446.5 L282.5 453.5 L289.5 459.5 L296.5 465.5 L303.5 471.5 L310.5 478.5 L317.5 484.5 L324.5 490.5 L331.5 496.5 L338.5 502.5 L345.5 508.5 L352.5 514.5 L359.5 520.5 L366.5 526.5 L373.5 532.5 L380.5 538.5 L387.5 543.5 L394.5 549.5 L401.5 554.5 L408.5 559.5 L415.5 565.5 L422.5 570.5 L429.5 574.5 L436.5 579.5 L443.5 583.5 L450.5 587.5 L457.5 591.5 L464.5 595.5 L471.5 598.5 L478.5 601.5 L485.5 604.5 L492.5 607.5 L499.5 609.5 L506.5 610.5 L513.5 612.5 L520.5 613.5 L527.5 614.5 L534.5 614.5 L541.5 614.5 L548.5 614.5 L555.5 613.5 L562.5 612.5 L569.5 611.5 L576.5 609.5 L583.5 607.5 L590.5 604.5 L597.5 602.5 L604.5 599.5 L611.5 595.5 L618.5 592.5 L625.5 588.5 L632.5 584.5 L639.5 579.5 L646.5 575.5 L653.5 570.5 L660.5 565.5 L667.5 560.5 L674.5 555.5 L681.5 550.5 L688.5 544.5 L695.5 538.5 L702.5 533.5 L709.5 527.5 L716.5 521.5 L723.5 515.5 L730.5 509.5 L737.5 503.5 L745.5 497.5 L752.5 491.5 L759.5 485.5 L766.5 478.5 L773.5 472.5 L780.5 466.5 L787.5 460.5 L794.5 453.5 L801.5 447.5 L808.5 441.5 L815.5 434.5 L822.5 428.5 L829.5 422.5 L836.5 415.5 L843.5 409.5 L850.5 403.5 L857.5 396.5 L864.5 390.5 L871.5 384.5 L878.5 377.5 L885.5 371.5 L892.5 365.5 L899.5 358.5 L906.5 352.5 L913.5 346.5 L920.5 339.5 L927.5 333.5 L934.5 327.5 L941.5 320.5 L948.5 314.5 L955.5 308.5 L962.5 301.5 L969.5 295.5 L976.5 289.5"/>
<path stroke-width="4.1" d="M78.5 269.5 L85.5 275.5 L92.5 282.5 L99.5 288.5 L106.5 294.5 L113.5 301.5 L120.5 307.5 L127.5 313.5 L134.5 320.5 L141.5 326.5 L148.5 332.5 L155.5 339.5 L162.5 345.5 L169.5 351.5 L176.5 358.5 L183.5 364.5 L190.5 370.5 L197.5 377.5 L204.5 383.5 L211.5 389.5 L218.5 396.5 L225.5 402.5 L232.5 408.5 L239.5 415.5 L246.5 421.5 L253.5 427.5 L260.5 434.5 L268.5 440.5 L275.5 446.5 L282.5 453.5 L289.5 459.5 L296.5 465.5 L303.5 472.5 L310.5 478.5 L317.5 484.5 L324.5 491.5 L331.5 497.5 L338.5 503.5 L345.5 510.5 L352.5 516.5 L359.5 522.5 L366.5 528.5 L373.5 534.5 L380.5 541.5 L387.5 547.5 L394.5 553.5 L401.5 558.5 L408.5 564.5 L415.5 570.5 L422.5 576.5 L429.5 581.5 L436.5 586.5 L443.5 591.5 L450.5 596.5 L457.5 601.5 L464.5 605.5 L471.5 609.5 L478.5 613.5 L485.5 616.5 L492.5 619.5 L499.5 622.5 L506.5 624.5 L513.5 626.5 L520.5 627.5 L527.5 628.5 L534.5 628.5 L541.5 628.5 L548.5 628.5 L555.5 627.5 L562.5 626.5 L569.5 624.5 L576.5 622.5 L583.5 619.5 L590.5 616.5 L597.5 613.5 L604.5 609.5 L611.5 605.5 L618.5 601.5 L625.5 597.5 L632.5 592.5 L639.5 587.5 L646.5 582.5 L653.5 576.5 L660.5 571.5 L667.5 565.5 L674.5 559.5 L681.5 553.5 L688.5 547.5 L695.5 541.5 L702.5 535.5 L709.5 529.5 L716.5 523.5 L723.5 517.5 L730.5 510.5 L737.5 504.5 L745.5 498.5 L752.5 491.5 L759.5 485.5 L766.5 479.5 L773.5 472.5 L780.5 466.5 L787.5 460.5 L794.5 453.5 L801.5 447.5 L808.5 441.5 L815.5 434.5 L822.5 428.5 L829.5 422.5 L836.5 415.5 L843.5 409.5 L850.5 403.5 L857.5 396.5 L864.5 390.5 L871.5 384.5 L878.5 377.5 L885.5 371.5 L892.5 365.5 L899.5 358.5 L906.5 352.5 L913.5 346.5 L920.5 339.5 L927.5 333.5 L934.5 327.5 L941.5 320.5 L948.5 314.5 L955.5 308.5 L962.5 301.5 L969.5 295.5 L976.5 289.5"/>
<path stroke-width="5.0" d="M78.5 269.5 L85.5 275.5 L92.5 282.5 L99.5 288.5 L106.5 294.5 L113.5 301.5 L120.5 307.5 L127.5 313.5 L134.5 320.5 L141.5 326.5 L148.5 332.5 L155.5 339.5 L162.5 345.5 L169.5 351.5 L176.5 358.5 L183.5 364.5 L190.5 370.5 L197.5 377.5 L204.5 383.5 L211.5 389.5 L218.5 396.5 L225.5 402.5 L232.5 408.5 L239.5 415.5 L246.5 421.5 L253.5 427.5 L260.5 434.5 L268.5 440.5 L275.5 446.5 L282.5 453.5 L289.5 459.5 L296.5 465.5 L303.5 472.5 L310.5 478.5 L317.5 484.5 L324.5 491.5 L331.5 497.5 L338.5 503.5 L345.5 510.5 L352.5 516.5 L359.5 522.5 L366.5 529.5 L373.5 535.5 L380.5 541.5 L387.5 548.5 L394.5 554.5 L401.5 560.5 L408.5 567.5 L415.5 573.5 L422.5 580.5 L429.5 586.5 L436.5 592.5 L443.5 599.5 L450.5 605.5 L457.5 611.5 L464.5 618.5 L471.5 624.5 L478.5 630.5 L485.5 637.5 L492.5 643.5 L499.5 649.5 L506.5 652.5 L513.5 652.5 L520.5 652.5 L527.5 652.5 L534.5 652.5 L541.5 652.5 L548.5 652.5 L555.5 652.5 L562.5 652.5 L569.5 652.5 L576.5 650.5 L583.5 644.5 L590.5 637.5 L597.5 631.5 L604.5 625.5 L611.5 618.5 L618.5 612.5 L625.5 606.5 L632.5 599.5 L639.5 593.5 L646.5 587.5 L653.5 580.5 L660.5 574.5 L667.5 568.5 L674.5 561.5 L681.5 555.5 L688.5 549.5 L695.5 542.5 L702.5 536.5 L709.5 530.5 L716.5 523.5 L723.5 517.5 L730.5 511.5 L737.5 504.5 L745.5 498.5 L752.5 492.5 L759.5 485.5 L766.5 479.5 L773.5 473.5 L780.5 466.5 L787.5 460.5 L794.5 454.5 L801.5 447.5 L808.5 441.5 L815.5 434.5 L822.5 428.5 L829.5 422.5 L836.5 415.5 L843.5 409.5 L850.5 403.5 L857.5 396.5 L864.5 390.5 L871.5 384.5 L878.5 377.5 L885.5 371.5 L892.5 365.5 L899.5 358.5 L906.5 352.5 L913.5 346.5 L920.5 339.5 L927.5 333.5 L934.5 327.5 L941.5 320.5 L948.5 314.5 L955.5 308.5 L962.5 301.5 L969.5 295.5 L976.5 289.5"/>
</g>
<line x1="68" y1="593.5" x2="986" y2="593.5" stroke="#f00000" stroke-width="1" stroke-dasharray="18 6" shape-rendering="crispEdges"/>
<line x1="68" y1="595.5" x2="986" y2="595.5" stroke="#ffffff" stroke-width="1" shape-rendering="crispEdges"/>
<line x1="524.5" y1="226" x2="524.5" y2="701" stroke="#ffff00" stroke-width="1" shape-rendering="crispEdges"/>
<line x1="68" y1="322.5" x2="986" y2="322.5" stroke="#ffffff" stroke-width="1" stroke-dasharray="1 1" shape-rendering="crispEdges"/>
<line x1="853.5" y1="226" x2="853.5" y2="701" stroke="#ffffff" stroke-width="1" stroke-dasharray="1 1" shape-rendering="crispEdges"/>
<g font-size="15" fill="#858585">
<text x="163.8" y="216" textLength="64.9" lengthAdjust="spacing">Date:LiVE</text>
<text x="236.4" y="216" textLength="155.8" lengthAdjust="spacing">Si.FORTS.Z2020:80131</text>
<text x="400.9" y="216" textLength="78.4" lengthAdjust="spacing">P/L:2456.30</text>
<text x="487.0" y="216" textLength="74.1" lengthAdjust="spacing">Delta:0.999</text>
<text x="569.3" y="216" textLength="100.8" lengthAdjust="spacing">Gamma:0.0000</text>
<text x="677.5" y="216" textLength="90.2" lengthAdjust="spacing">Theta:-0.4032</text>
<text x="775.9" y="216" textLength="81.8" lengthAdjust="spacing">Vega:0.1294</text>
</g>
<g font-size="11" fill="#f4f4f4" text-anchor="end" style="letter-spacing:-0.15px">
<text x="61.3" y="705">-800</text>
<text x="61.3" y="679">-600</text>
<text x="61.3" y="652">-400</text>
<text x="61.3" y="626">-200</text>
<text x="61.3" y="599">0</text>
<text x="61.3" y="573">200</text>
<text x="61.3" y="547">400</text>
<text x="61.3" y="520">600</text>
<text x="61.3" y="494">800</text>
<text x="61.3" y="468">1000</text>
<text x="61.3" y="441">1200</text>
<text x="61.3" y="415">1400</text>
<text x="61.3" y="388">1600</text>
<text x="61.3" y="362">1800</text>
<text x="61.3" y="336">2000</text>
<text x="61.3" y="309">2200</text>
<text x="61.3" y="283">2400</text>
<text x="61.3" y="256">2600</text>
<text x="61.3" y="230">2800</text>
</g>
<g font-size="11" fill="#f4f4f4" text-anchor="middle" style="letter-spacing:-0.15px">
<text x="99.7" y="719">74 000</text>
<text x="172.7" y="719">74 500</text>
<text x="245.7" y="719">75 000</text>
<text x="318.7" y="719">75 500</text>
<text x="391.7" y="719">76 000</text>
<text x="464.7" y="719">76 500</text>
<text x="537.7" y="719">77 000</text>
<text x="610.7" y="719">77 500</text>
<text x="683.7" y="719">78 000</text>
<text x="756.7" y="719">78 500</text>
<text x="829.7" y="719">79 000</text>
<text x="902.7" y="719">79 500</text>
<text x="975.7" y="719">80 000</text>
</g>
</svg>
</body></html>
